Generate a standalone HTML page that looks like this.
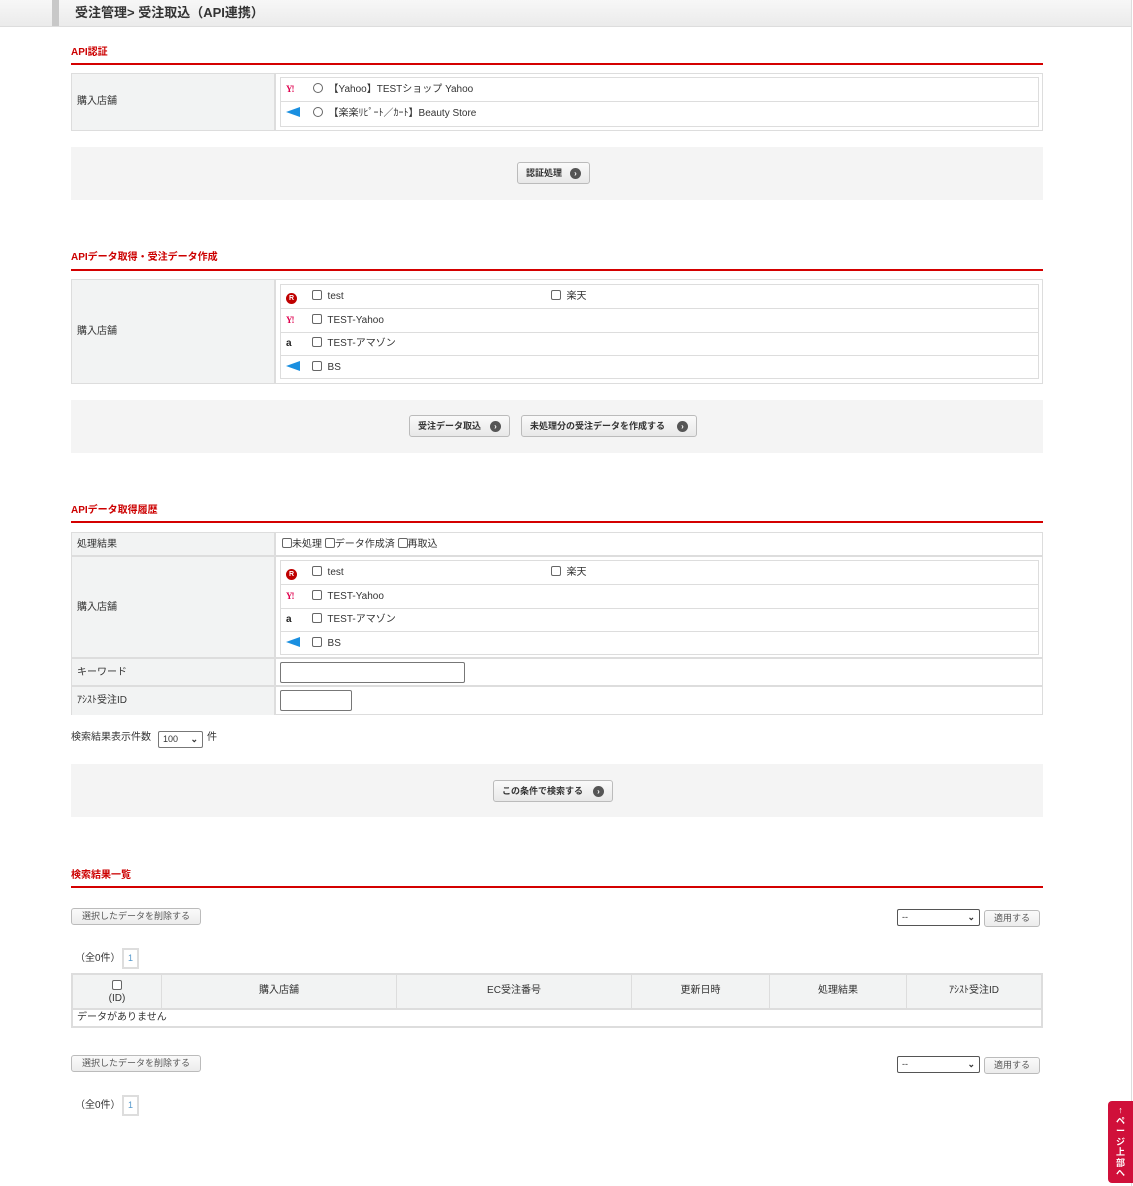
<!DOCTYPE html>
<html><head><meta charset="utf-8">
<style>
*{box-sizing:border-box;margin:0;padding:0}
body{width:1133px;height:1186px;position:relative;background:#fff;font-family:"Liberation Sans","Noto Sans CJK JP",sans-serif;font-size:10px;line-height:12px;color:#333;overflow:hidden}
.a{position:absolute}
.hdr{left:0;top:0;width:1131px;height:27px;background:linear-gradient(#f7f7f7,#ebebeb);border-bottom:1px solid #ddd}
.hdr .bk{position:absolute;left:52px;top:0;width:7px;height:26px;background:#c8c8c8}
.hdr .t{position:absolute;left:75px;top:5px;font-size:13px;line-height:16px;font-weight:bold;color:#333}
.vline{left:1131px;top:0;width:1px;height:1186px;background:#ddd}
.st{left:71px;font-size:10px;font-weight:bold;color:#c00}
.rl{left:71px;width:972px;height:2px;background:#d40000}
.tb{left:71px;width:972px;border:1px solid #ddd;background:#fff}
.lb{position:absolute;left:0;top:0;width:204px;height:100%;background:#f2f3f3;border-right:2px solid #ddd}
.lb span{position:absolute;left:5px;top:50%;transform:translateY(-50%)}
.hl{left:71px;width:972px;height:2px;background:#ddd}
.in{left:280px;width:759px;border:1px solid #ddd}
.row{position:absolute;left:0;width:757px;border-bottom:1px solid #ddd;height:24px;line-height:23px}
.row:last-child{border-bottom:none}
.row .ic{position:absolute;left:5px;top:0}
.row .tx{position:absolute;left:48px;top:0;white-space:nowrap}
.cb{display:inline-block;width:10px;height:10px;border:1px solid #666;border-radius:2px;vertical-align:-1px;background:#fff}
.rd{display:inline-block;width:10px;height:10px;border:1px solid #666;border-radius:50%;vertical-align:-1px}
.box{left:71px;width:972px;background:#f4f4f4}
.btn{position:absolute;height:22px;border:1px solid #bbb;border-radius:3px;background:linear-gradient(#fafafa,#e8e8e8);font-size:9px;font-weight:bold;color:#333;line-height:20px;padding-left:8px}
.btn i{position:absolute;right:8px;top:5px;width:11px;height:11px;border-radius:50%;background:#555;color:#fff;font-style:normal;font-size:8px;line-height:11px;text-align:center}
.sbtn{position:absolute;height:17px;border:1px solid #bbb;border-radius:3px;background:linear-gradient(#fafafa,#ececec);font-size:9px;color:#555;text-align:center;line-height:15px}
.sel{position:absolute;height:17px;border:1px solid #555;border-radius:2px;background:#fff;font-size:9px;padding-left:4px;line-height:15px}
.sel b{position:absolute;right:4px;top:0;font-size:9px}
.pg{position:absolute;width:17px;height:21px;border:2px solid #ddd;background:#fff;color:#59c;font-size:9px;text-align:center;line-height:17px}
.th{position:absolute;top:0;height:33px;border-right:1px solid #ddd;background:#f2f3f3;text-align:center;line-height:32px}
.yh{color:#e0004e;font-weight:bold;font-size:9px;letter-spacing:-1px;font-family:"Liberation Serif",serif}
.rk{display:inline-block;width:11px;height:11px;border-radius:50%;background:#bf0000;color:#fff;font-size:7px;font-weight:bold;text-align:center;line-height:11px;vertical-align:-1px}
.am{font-weight:bold;font-size:10px;color:#222}
</style></head><body>
<div class="a hdr"><div class="bk"></div><div class="t">受注管理&gt; 受注取込（API連携）</div></div>
<div class="a vline"></div>

<div class="a st" style="top:47px">API認証</div>
<div class="a rl" style="top:63px"></div>
<div class="a tb" style="top:73px;height:58px">
  <div class="lb"><span>購入店舗</span></div>
</div>
<div class="a in" style="top:77px;height:50px">
  <div class="row" style="top:0"><span class="ic yh">Y!</span><span class="tx" style="left:32px"><span class="rd"></span>&nbsp;&nbsp;【Yahoo】TESTショップ Yahoo</span></div>
  <div class="row" style="top:24px"><span class="ic"><svg width="14" height="10" style="vertical-align:-1px"><path d="M0 5L14 0V10Z" fill="#1a8fe0"/></svg></span><span class="tx" style="left:32px"><span class="rd"></span>&nbsp;&nbsp;【楽楽ﾘﾋﾟｰﾄ／ｶｰﾄ】Beauty Store</span></div>
</div>
<div class="a box" style="top:147px;height:53px">
  <div class="btn" style="left:446px;top:15px;width:73px">認証処理<i>›</i></div>
</div>

<div class="a st" style="top:252px">APIデータ取得・受注データ作成</div>
<div class="a rl" style="top:269px"></div>
<div class="a tb" style="top:279px;height:105px">
  <div class="lb"><span>購入店舗</span></div>
</div>
<div class="a in" style="top:284px;height:95px">
  <div class="row" style="top:0"><span class="ic"><span class="rk">R</span></span><span class="tx" style="left:31px"><span class="cb"></span>&nbsp; test</span><span class="tx" style="left:270px"><span class="cb"></span>&nbsp; 楽天</span></div>
  <div class="row" style="top:24px"><span class="ic yh">Y!</span><span class="tx" style="left:31px"><span class="cb"></span>&nbsp; TEST-Yahoo</span></div>
  <div class="row" style="top:47px"><span class="ic am">a</span><span class="tx" style="left:31px"><span class="cb"></span>&nbsp; TEST-アマゾン</span></div>
  <div class="row" style="top:71px"><span class="ic"><svg width="14" height="10" style="vertical-align:-1px"><path d="M0 5L14 0V10Z" fill="#1a8fe0"/></svg></span><span class="tx" style="left:31px"><span class="cb"></span>&nbsp; BS</span></div>
</div>
<div class="a box" style="top:400px;height:53px">
  <div class="btn" style="left:338px;top:15px;width:101px">受注データ取込<i>›</i></div>
  <div class="btn" style="left:450px;top:15px;width:176px">未処理分の受注データを作成する<i>›</i></div>
</div>

<div class="a st" style="top:505px">APIデータ取得履歴</div>
<div class="a rl" style="top:521px"></div>
<div class="a tb" style="top:532px;height:183px">
  <div class="lb" style="height:23px;top:0"><span>処理結果</span></div>
  <div class="lb" style="height:102px;top:24px"><span>購入店舗</span></div>
  <div class="lb" style="height:27px;top:126px"><span>キーワード</span></div>
  <div class="lb" style="height:28px;top:154px"><span>ｱｼｽﾄ受注ID</span></div>
</div>
<div class="a hl" style="top:555px"></div>
<div class="a hl" style="top:657px"></div>
<div class="a hl" style="top:685px"></div>
<div class="a" style="left:282px;top:538px"><span class="cb"></span>未処理 <span class="cb"></span>データ作成済 <span class="cb"></span>再取込</div>
<div class="a in" style="top:560px;height:95px">
  <div class="row" style="top:0"><span class="ic"><span class="rk">R</span></span><span class="tx" style="left:31px"><span class="cb"></span>&nbsp; test</span><span class="tx" style="left:270px"><span class="cb"></span>&nbsp; 楽天</span></div>
  <div class="row" style="top:24px"><span class="ic yh">Y!</span><span class="tx" style="left:31px"><span class="cb"></span>&nbsp; TEST-Yahoo</span></div>
  <div class="row" style="top:47px"><span class="ic am">a</span><span class="tx" style="left:31px"><span class="cb"></span>&nbsp; TEST-アマゾン</span></div>
  <div class="row" style="top:71px"><span class="ic"><svg width="14" height="10" style="vertical-align:-1px"><path d="M0 5L14 0V10Z" fill="#1a8fe0"/></svg></span><span class="tx" style="left:31px"><span class="cb"></span>&nbsp; BS</span></div>
</div>
<div class="a" style="left:280px;top:662px;width:185px;height:21px;border:1px solid #777;border-radius:2px"></div>
<div class="a" style="left:280px;top:690px;width:72px;height:21px;border:1px solid #777;border-radius:2px"></div>
<div class="a" style="left:71px;top:732px">検索結果表示件数</div>
<div class="sel" style="left:158px;top:731px;width:45px;border-color:#777">100<b>⌄</b></div>
<div class="a" style="left:207px;top:732px">件</div>
<div class="a box" style="top:764px;height:53px">
  <div class="btn" style="left:422px;top:16px;width:120px">この条件で検索する<i>›</i></div>
</div>

<div class="a st" style="top:870px">検索結果一覧</div>
<div class="a rl" style="top:886px"></div>
<div class="sbtn" style="left:71px;top:908px;width:130px">選択したデータを削除する</div>
<div class="sel" style="left:897px;top:909px;width:83px">--<b>⌄</b></div>
<div class="sbtn" style="left:984px;top:910px;width:56px">適用する</div>
<div class="a" style="left:75px;top:953px">（全0件）</div>
<div class="pg" style="left:122px;top:948px">1</div>
<div class="a" style="left:71px;top:973px;width:972px;height:55px;border:2px solid #ddd;background:#fff">
  <div class="th" style="left:0;width:89px;line-height:12px;padding-top:5px"><span class="cb"></span><br>(ID)</div>
  <div class="th" style="left:89px;width:235px">購入店舗</div>
  <div class="th" style="left:324px;width:235px">EC受注番号</div>
  <div class="th" style="left:559px;width:138px">更新日時</div>
  <div class="th" style="left:697px;width:137px">処理結果</div>
  <div class="th" style="left:834px;width:134px;border-right:none">ｱｼｽﾄ受注ID</div>
  <div class="a" style="left:0;top:33px;width:968px;height:2px;background:#ddd"></div>
  <div class="a" style="left:4px;top:37px">データがありません</div>
</div>
<div class="sbtn" style="left:71px;top:1055px;width:130px">選択したデータを削除する</div>
<div class="sel" style="left:897px;top:1056px;width:83px">--<b>⌄</b></div>
<div class="sbtn" style="left:984px;top:1057px;width:56px">適用する</div>
<div class="a" style="left:75px;top:1100px">（全0件）</div>
<div class="pg" style="left:122px;top:1095px">1</div>

<div class="a" style="left:1108px;top:1101px;width:25px;height:82px;background:#d0103a;border-radius:4px 0 0 4px;color:#fff;font-size:9px;font-weight:bold;text-align:center;line-height:10.5px;padding-top:4px">↑<br>ペ<br>ー<br>ジ<br>上<br>部<br>へ</div>
</body></html>
